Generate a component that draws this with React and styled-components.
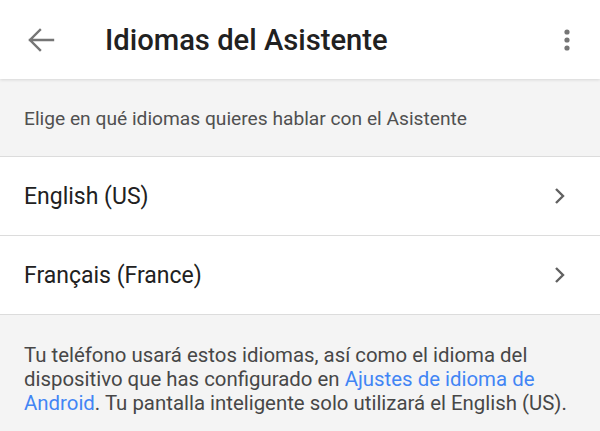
import React from "react";
import styled, { createGlobalStyle } from "styled-components";

const GlobalStyle = createGlobalStyle`
  html, body {
    margin: 0;
    padding: 0;
    background: #f4f4f4;
  }
  body {
    font-family: Roboto, "Noto Sans", "Liberation Sans", sans-serif;
    -webkit-font-smoothing: antialiased;
  }
`;

const Page = styled.div`
  width: 600px;
  height: 431px;
  overflow: hidden;
  background: #f4f4f4;
  display: flex;
  flex-direction: column;
`;

const Toolbar = styled.header`
  height: 79px;
  flex-shrink: 0;
  background: #fff;
  display: flex;
  align-items: center;
  padding: 0 14px 0 22px;
  box-shadow: 0 1px 3px rgba(0, 0, 0, 0.12);
  position: relative;
  z-index: 1;
`;

const IconButton = styled.button`
  border: 0;
  background: none;
  padding: 0;
  width: 38px;
  height: 38px;
  display: flex;
  align-items: center;
  justify-content: center;
  color: #757575;
`;

const Title = styled.h1`
  flex: 1;
  margin: 0 0 0 45px;
  font-size: 29.2px;
  font-weight: 500;
  color: #212121;
`;

const Intro = styled.div`
  height: 75px;
  flex-shrink: 0;
  display: flex;
  align-items: center;
  padding: 2px 24px 0;
  font-size: 19.2px;
  color: #505050;
  border-bottom: 1px solid #dcdcdc;
`;

const List = styled.ul`
  list-style: none;
  margin: 0;
  padding: 0;
  background: #fff;
`;

const Row = styled.li`
  height: 78px;
  display: flex;
  align-items: center;
  justify-content: space-between;
  padding: 0 34px 0 24px;
  border-bottom: 1px solid #dcdcdc;
  font-size: 23px;
  color: #212121;
`;

const Footer = styled.p`
  margin: 0;
  padding: 28px 24px 0;
  font-size: 20.4px;
  line-height: 24px;
  color: #474747;
`;

const Link = styled.a`
  color: #4285f4;
  text-decoration: none;
`;

const BackIcon = () => (
  <svg width="28" height="24" viewBox="0 0 28 24" fill="none">
    <path
      d="M26 12H3M13 2L3 12l10 10"
      stroke="currentColor"
      strokeWidth="2.4"
      strokeLinecap="square"
    />
  </svg>
);

const MoreIcon = () => (
  <svg width="8" height="24" viewBox="0 0 8 24" fill="#757575">
    <circle cx="4" cy="4" r="2.6" />
    <circle cx="4" cy="12" r="2.6" />
    <circle cx="4" cy="20" r="2.6" />
  </svg>
);

const Chevron = () => (
  <svg width="12" height="18" viewBox="0 0 12 18" fill="none">
    <path d="M2 2l7 7-7 7" stroke="#616161" strokeWidth="2.4" />
  </svg>
);

const languages = ["English (US)", "Français (France)"];

export default function App() {
  return (
    <>
      <GlobalStyle />
      <Page>
        <Toolbar>
          <IconButton aria-label="Atrás">
            <BackIcon />
          </IconButton>
          <Title>Idiomas del Asistente</Title>
          <IconButton aria-label="Más opciones">
            <MoreIcon />
          </IconButton>
        </Toolbar>
        <Intro>Elige en qué idiomas quieres hablar con el Asistente</Intro>
        <List>
          {languages.map((lang) => (
            <Row key={lang}>
              {lang}
              <Chevron />
            </Row>
          ))}
        </List>
        <Footer>
          Tu teléfono usará estos idiomas, así como el idioma del dispositivo
          que has configurado en <Link>Ajustes de idioma de Android</Link>. Tu
          pantalla inteligente solo utilizará el English (US).
        </Footer>
      </Page>
    </>
  );
}
